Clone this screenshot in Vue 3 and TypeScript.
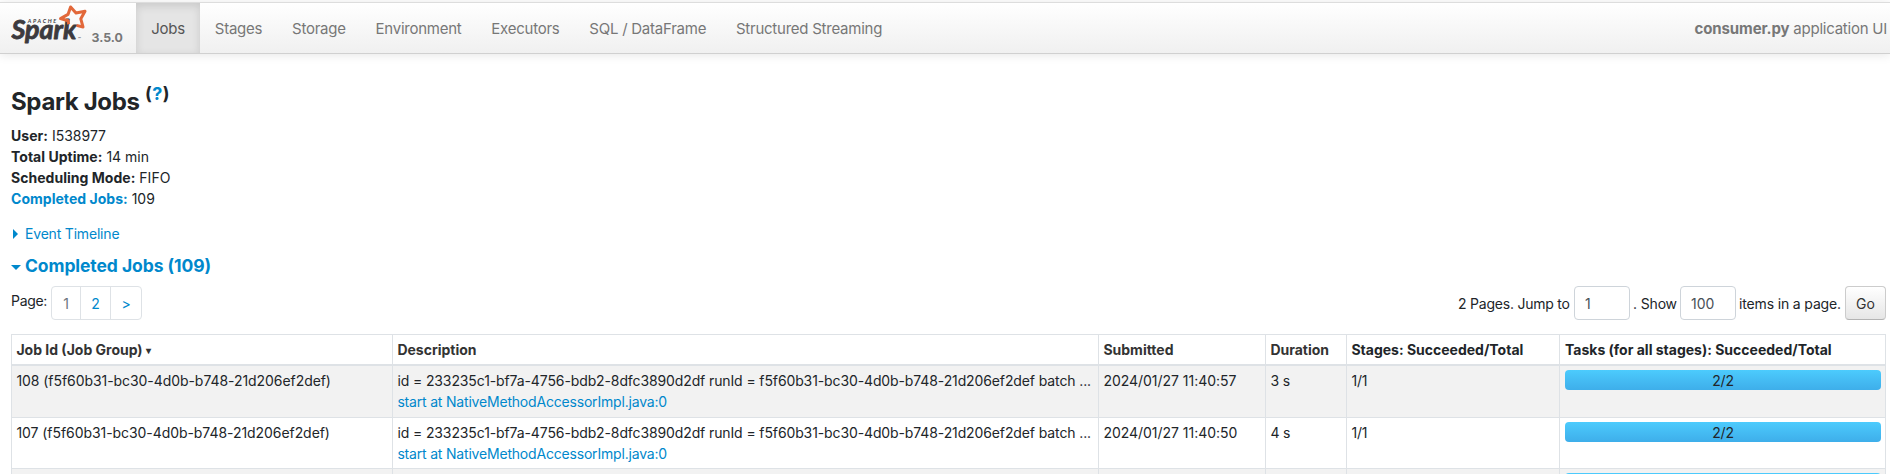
<script setup lang="ts">
interface Job {
  id: number
  submitted: string
  duration: string
  stages: string
  done: number
  total: number
}

const tabs: string[] = ['Jobs', 'Stages', 'Storage', 'Environment', 'Executors', 'SQL / DataFrame', 'Structured Streaming']
const active = 'Jobs'

const summary = [
  { label: 'User:', value: 'I538977', link: false },
  { label: 'Total Uptime:', value: '14 min', link: false },
  { label: 'Scheduling Mode:', value: 'FIFO', link: false },
  { label: 'Completed Jobs:', value: '109', link: true },
]

const group = 'f5f60b31-bc30-4d0b-b748-21d206ef2def'
const query = '233235c1-bf7a-4756-bdb2-8dfc3890d2df'

const jobs: Job[] = [
  { id: 108, submitted: '2024/01/27 11:40:57', duration: '3 s', stages: '1/1', done: 2, total: 2 },
  { id: 107, submitted: '2024/01/27 11:40:50', duration: '4 s', stages: '1/1', done: 2, total: 2 },
]
</script>

<template>
  <div class="page">
    <nav class="navbar">
      <a class="brand">
        <svg class="logo" width="78" height="40" viewBox="0 0 78 40">
          <text class="apache" x="16.8" y="17.8" textLength="28.5">APACHE</text>
          <text class="spark" x="0.5" y="33.8" textLength="65" lengthAdjust="spacingAndGlyphs">Spark</text>
          <path
            class="star"
            d="M57.6 19.2 L57.2 15.8 L49.5 13.6 L57 9.4 L59.6 2 L65 8 L74 6.2 L69.8 13.8 L72 22 L65.5 20.4"
          />
          <text class="tm" x="67" y="34.5">™</text>
        </svg>
        <span class="version">3.5.0</span>
      </a>
      <ul class="tabs">
        <li v-for="tab in tabs" :key="tab" :class="{ active: tab === active }">{{ tab }}</li>
      </ul>
      <span class="app-name"><strong>consumer.py</strong> application UI</span>
    </nav>

    <main class="content">
      <h3 class="title">Spark Jobs <sup>(<a>?</a>)</sup></h3>

      <ul class="summary">
        <li v-for="item in summary" :key="item.label">
          <strong :class="{ link: item.link }">{{ item.label }}</strong> {{ item.value }}
        </li>
      </ul>

      <a class="timeline"><i class="arrow closed"></i>Event Timeline</a>
      <h4 class="section"><i class="arrow open"></i>Completed Jobs (109)</h4>

      <div class="paging">
        <span class="page-label">Page:</span>
        <ul class="pager">
          <li class="current">1</li>
          <li>2</li>
          <li>&gt;</li>
        </ul>
        <form class="jump" @submit.prevent>
          <span class="t1">2 Pages. Jump to</span>
          <input type="text" value="1" />
          <span class="t2">. Show</span>
          <input type="text" value="100" />
          <span class="t3">items in a page.</span>
          <button type="button">Go</button>
        </form>
      </div>

      <table class="jobs">
        <colgroup>
          <col class="c-id" /><col class="c-desc" /><col class="c-sub" /><col class="c-dur" /><col class="c-stages" /><col class="c-tasks" />
        </colgroup>
        <thead>
          <tr>
            <th class="sortable">Job Id (Job Group) <span class="sort">▾</span></th>
            <th class="sortable">Description</th>
            <th class="sortable">Submitted</th>
            <th class="sortable">Duration</th>
            <th>Stages: Succeeded/Total</th>
            <th>Tasks (for all stages): Succeeded/Total</th>
          </tr>
        </thead>
        <tbody>
          <tr v-for="job in jobs" :key="job.id">
            <td class="ident">{{ job.id }} ({{ group }})</td>
            <td>
              <div class="desc">id = {{ query }} runId = {{ group }} batch ...</div>
              <a>start at NativeMethodAccessorImpl.java:0</a>
            </td>
            <td class="date">{{ job.submitted }}</td>
            <td>{{ job.duration }}</td>
            <td>{{ job.stages }}</td>
            <td>
              <div class="progress">
                <div class="bar" :style="{ width: (job.done / job.total) * 100 + '%' }"></div>
                <span>{{ job.done }}/{{ job.total }}</span>
              </div>
            </td>
          </tr>
          <tr>
            <td v-for="n in 5" :key="n"></td>
            <td><div class="progress"><div class="bar full"></div></div></td>
          </tr>
        </tbody>
      </table>
    </main>
  </div>
</template>

<style>
body {
  margin: 0;
  background: #fff;
}
</style>

<style scoped>
.page {
  height: 474px;
  overflow: hidden;
  box-sizing: border-box;
  padding-top: 2px;
  font: 14px/21px Inter, 'Liberation Sans', sans-serif;
  letter-spacing: -0.15px;
  color: #212529;
}
ul {
  list-style: none;
  margin: 0;
  padding: 0;
}
a,
.link {
  color: #0088cc;
}
strong {
  font-weight: 700;
  letter-spacing: -0.12px;
}
.navbar {
  display: flex;
  height: 50px;
  border-top: 1px solid #ddd;
  border-bottom: 1px solid #d0d0d0;
  background: linear-gradient(#fff, #f0f0f0);
  box-shadow: 0 1px 10px rgba(0, 0, 0, 0.1);
  font-size: 15px;
  letter-spacing: -0.24px;
  color: #777;
}
.brand {
  display: flex;
  width: 136px;
  color: #777;
}
.logo {
  display: block;
  margin-left: 11px;
  margin-top: 2px;
  letter-spacing: 0;
}
.spark {
  font: italic 700 26px Lato, sans-serif;
  fill: #3c3a3e;
  stroke: #3c3a3e;
  stroke-width: 0.8;
  stroke-linejoin: round;
}
.apache {
  font: italic 700 5.5px Lato, sans-serif;
  fill: #3c3a3e;
}
.tm {
  font: 4px Lato, sans-serif;
  fill: #3c3a3e;
}
.star {
  fill: none;
  stroke: #e2683a;
  stroke-width: 3;
  stroke-linejoin: round;
}
.version {
  margin: 24px 0 0 2.5px;
  font-size: 12.3px;
  font-weight: 700;
  letter-spacing: 0;
}
.tabs {
  display: flex;
}
.tabs li {
  padding: 0 14.9px;
  line-height: 51px;
}
.tabs .active {
  padding-left: 15.3px;
  color: #555;
  background: #e5e5e5;
  box-shadow: inset 0 3px 8px rgba(0, 0, 0, 0.125);
}
.app-name {
  margin-left: auto;
  margin-right: 3px;
  line-height: 51px;
}
.content {
  padding: 0 4px 0 11px;
}
.title {
  box-sizing: border-box;
  height: 71px;
  margin: 0;
  padding-top: 33px;
  font-size: 24px;
  line-height: 29px;
  font-weight: 700;
  letter-spacing: -0.35px;
}
.title sup {
  font-size: 18px;
  line-height: 0;
  vertical-align: baseline;
  position: relative;
  top: -10px;
  letter-spacing: 0.5px;
}
.summary {
  letter-spacing: 0;
}
.summary strong {
  letter-spacing: 0.03px;
}
.timeline {
  display: flex;
  align-items: center;
  margin-top: 14px;
  letter-spacing: -0.19px;
}
.arrow {
  width: 14px;
  height: 10px;
  flex: none;
}
.arrow::before {
  content: '';
  display: block;
  width: 0;
}
.closed::before {
  margin-left: 2px;
  border: 5px solid transparent;
  border-left-color: #0088cc;
  border-right: 0;
}
.open::before {
  margin-top: 4px;
  border: 5px solid transparent;
  border-top-color: #0088cc;
  border-bottom: 0;
}
.section {
  display: flex;
  align-items: center;
  height: 29px;
  margin: 7px 0 0;
  font-size: 17.5px;
  line-height: 21px;
  font-weight: 700;
  letter-spacing: -0.08px;
  color: #0088cc;
}
.paging {
  display: flex;
  height: 34px;
  margin-top: 6px;
}
.page-label {
  width: 40px;
  line-height: 29px;
  letter-spacing: -0.3px;
}
.pager {
  display: flex;
  box-sizing: border-box;
  height: 34px;
  border: 1px solid #dee2e6;
  border-radius: 4px;
  color: #0088cc;
}
.pager li {
  width: 29px;
  line-height: 33px;
  text-align: center;
}
.pager li + li {
  border-left: 1px solid #dee2e6;
}
.pager .current {
  width: 28px;
  color: #6c757d;
}
.pager li:last-child {
  width: 30px;
}
.jump {
  display: flex;
  margin-left: auto;
  line-height: 35px;
}
.jump span {
  box-sizing: border-box;
  white-space: nowrap;
}
.t1 {
  width: 116px;
  letter-spacing: -0.22px;
}
.t2 {
  width: 50px;
  padding-left: 3px;
}
.t3 {
  width: 109px;
  padding-left: 3px;
}
.jump input,
.jump button {
  box-sizing: border-box;
  height: 34px;
  border: 1px solid #ced4da;
  border-radius: 4px;
  font: inherit;
  line-height: 21px;
}
.jump input {
  width: 56px;
  padding: 0 10px;
  color: #495057;
  background: #fff;
}
.jump button {
  width: 41px;
  padding: 0;
  color: #333;
  border-color: #ccc #ccc #b3b3b3;
  background: linear-gradient(#fff, #e6e6e6);
}
.jobs {
  width: 1875px;
  margin-top: 14px;
  table-layout: fixed;
  border-collapse: separate;
  border-spacing: 0;
  border: 0 solid #dee2e6;
  border-width: 1px 0 0 1px;
}
.c-id { width: 381px; }
.c-desc { width: 706px; }
.c-sub { width: 167px; }
.c-dur { width: 81px; }
.c-stages { width: 213px; }
.c-tasks { width: 326px; }
th,
td {
  box-sizing: border-box;
  padding: 4px 4px 0 4.4px;
  border: 0 solid #dee2e6;
  border-width: 0 1px 1px 0;
  text-align: left;
  vertical-align: top;
  white-space: nowrap;
}
th:nth-child(n + 6),
td:nth-child(n + 6) {
  padding-left: 5px;
}
th {
  height: 31px;
  border-bottom-width: 2px;
  font-weight: 700;
  letter-spacing: 0;
}
th.sortable {
  color: #333;
}
.sort {
  font-size: 10px;
  line-height: 0;
  vertical-align: 1px;
}
td {
  height: 52px;
}
tbody tr:nth-child(even) td {
  height: 51px;
}
tbody tr:nth-child(odd) {
  background: #f2f2f2;
}
td a {
  display: block;
  letter-spacing: -0.19px;
}
.ident {
  letter-spacing: -0.06px;
}
.desc {
  letter-spacing: -0.115px;
}
.date {
  letter-spacing: -0.03px;
}
.progress {
  position: relative;
  height: 20px;
  border-radius: 4px;
  overflow: hidden;
  text-align: center;
  line-height: 22px;
}
.bar {
  position: absolute;
  inset: 0 auto 0 0;
  background: linear-gradient(#4ccbfd, #3eaeea);
}
.full {
  width: 100%;
}
.progress span {
  position: relative;
}
</style>
